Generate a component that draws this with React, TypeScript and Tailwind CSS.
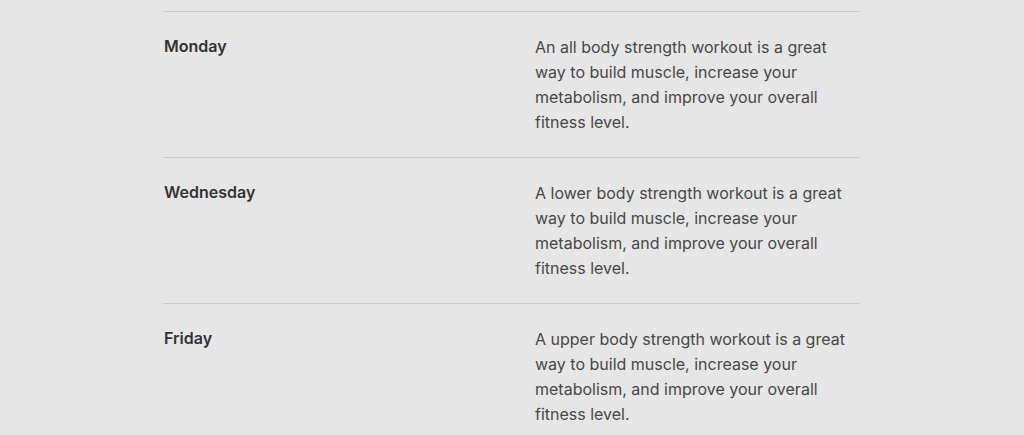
import React from "react";

const rows = [
  { day: "Monday", text: "An all body strength workout is a great way to build muscle, increase your metabolism, and improve your overall fitness level." },
  { day: "Wednesday", text: "A lower body strength workout is a great way to build muscle, increase your metabolism, and improve your overall fitness level." },
  { day: "Friday", text: "A upper body strength workout is a great way to build muscle, increase your metabolism, and improve your overall fitness level." },
];

export default function App() {
  return (
    <div className="min-h-[435px] w-full bg-[#e6e6e6] pt-[11px] font-['Inter',sans-serif]">
      <div className="ml-[163px] w-[697px]">
        {rows.map((r) => (
          <div key={r.day} className="flex border-t border-[#cbcbcb] pt-[23px] pb-[22px]">
            <div className="w-[372px] pl-px text-[16px] leading-[23px] font-semibold text-[#333333]">{r.day}</div>
            <div className="w-[325px] text-[16px] leading-[25px] text-[#484848]">{r.text}</div>
          </div>
        ))}
      </div>
    </div>
  );
}
